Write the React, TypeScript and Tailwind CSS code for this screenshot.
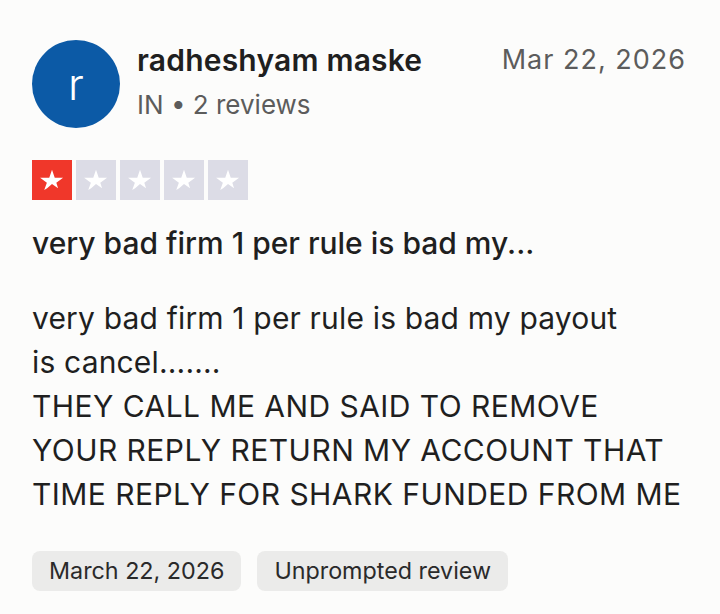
import React from "react";

function Star({ className }: { className?: string }) {
  return (
    <svg viewBox="0 0 24 24" className={className} fill="white">
      <path d="M12 3.2l2.35 6.9h7.15l-5.8 4.25 1.5 4.65L12 15.4l-4.2 3.6-2.45 1.6 2.25-6.25L1.8 10.1h7.85z" />
    </svg>
  );
}

export default function App() {
  const font = { fontFamily: "Inter, 'Noto Sans', 'Liberation Sans', sans-serif" };
  return (
    <div className="w-[720px] h-[614px] bg-[#fcfcfb] text-[#1c1c1c] overflow-hidden" style={font}>
      <div className="pl-[32px] pr-[34px] pt-[40px]">
        <div className="flex items-start">
          <div className="w-[88px] h-[88px] rounded-full bg-[#0c5aa6] flex items-center justify-center text-white text-[44px] font-light leading-none shrink-0">
            r
          </div>
          <div className="ml-[17px] flex-1 flex justify-between">
            <div className="flex flex-col">
              <div className="text-[30px] leading-[40px] font-semibold text-[#1f1f1f] tracking-[0.2px]">radheshyam maske</div>
              <div className="text-[26px] leading-[32px] text-[#5c5c5c] mt-[9px]">IN • 2 reviews</div>
            </div>
            <div className="text-[27px] leading-[38px] text-[#5c5c5c] tracking-[1px] mt-[1px]">Mar 22, 2026</div>
          </div>
        </div>
        <div className="flex gap-[4px] mt-[32px]">
          <div className="w-[40px] h-[40px] bg-[#f0372a] flex items-center justify-center">
            <Star className="w-[28px] h-[28px]" />
          </div>
          {[0, 1, 2, 3].map((i) => (
            <div key={i} className="w-[40px] h-[40px] bg-[#dcdce6] flex items-center justify-center">
              <Star className="w-[28px] h-[28px]" />
            </div>
          ))}
        </div>
        <div className="mt-[25px] text-[30px] leading-[36px] font-medium text-[#1f1f1f] whitespace-nowrap">very bad firm 1 per rule is bad my...</div>
        <div className="mt-[35px] text-[30px] leading-[44px] text-[#1f1f1f] whitespace-nowrap">
          <div className="tracking-[0.17px]">very bad firm 1 per rule is bad my payout</div>
          <div className="tracking-[0.17px]">is cancel.......</div>
          <div className="tracking-[0.45px]">THEY CALL ME AND SAID TO REMOVE</div>
          <div className="tracking-[0.45px]">YOUR REPLY RETURN MY ACCOUNT THAT</div>
          <div className="tracking-[0.45px]">TIME REPLY FOR SHARK FUNDED FROM ME</div>
        </div>
        <div className="flex gap-[16px] mt-[35px]">
          <div className="h-[40px] px-[17px] rounded-[8px] bg-[#ebebea] flex items-center text-[23.3px] text-[#2a2a2a]">March 22, 2026</div>
          <div className="h-[40px] px-[17px] rounded-[8px] bg-[#ebebea] flex items-center text-[23.3px] text-[#2a2a2a]">Unprompted review</div>
        </div>
      </div>
    </div>
  );
}
